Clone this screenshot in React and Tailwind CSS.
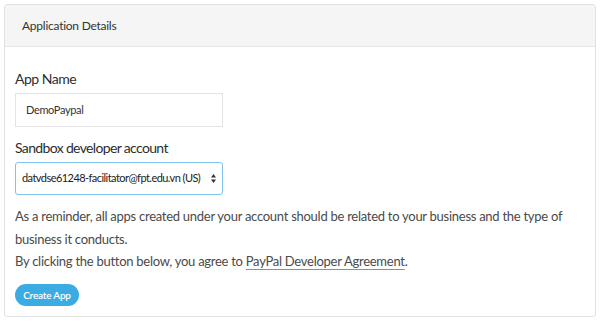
import React from 'react';

const App = () => {
  return (
    <div className="w-[602px] h-[322px] bg-white p-1" style={{ fontFamily: 'Lato, "Open Sans", sans-serif' }}>
      <div className="w-[592px] h-[313px] border border-[#e2e2e2] rounded-[3px] overflow-hidden">
        {/* header */}
        <div className="h-[42px] bg-[#f5f5f5] border-b border-[#e6e6e6] flex items-center px-[17px]">
          <span className="text-[12px] tracking-[-0.25px] text-[#333]">Application Details</span>
        </div>

        <div className="px-[10px] pt-[23px]">
          <label className="block text-[14px] tracking-[-0.5px] leading-[18px] text-[#2c2e2f]">App Name</label>
          <div className="mt-[5px] w-[208px] h-[34px] border border-[#e3e3e3] flex items-center px-[10px] text-[11px] tracking-[-0.35px] text-[#333]">
            DemoPaypal
          </div>

          <label className="block mt-[12px] text-[14px] tracking-[-0.65px] leading-[18px] text-[#2c2e2f]">Sandbox developer account</label>
          <div className="mt-[5px] w-[208px] h-[33px] border border-[#80c2ec] rounded-[3px] flex items-center justify-between pl-[6px] pr-[4px] text-[11px] tracking-[-0.55px] text-[#222] whitespace-nowrap">
            <span>datvdse61248-facilitator@fpt.edu.vn (US)</span>
            <svg width="7" height="11" viewBox="0 0 7 11" className="mr-[1px] shrink-0">
              <path d="M3.5 1 L6 4.5 H1 Z" fill="#333" />
              <path d="M3.5 10 L6 6.5 H1 Z" fill="#333" />
            </svg>
          </div>

          <p className="mt-[10px] text-[13px] tracking-[-0.27px] leading-[23px] text-[#4a4a4a] pr-[6px]">
            As a reminder, all apps created under your account should be related to your business and the type of business it conducts.
          </p>
          <p className="text-[13px] tracking-[-0.27px] leading-[21px] text-[#4a4a4a]">
            By clicking the button below, you agree to{' '}
            <a className="underline decoration-[#3aa9e0] underline-offset-[3px] text-[#4a4a4a]">PayPal Developer Agreement</a>.
          </p>

          <button className="mt-[12px] h-[22px] w-[64px] rounded-full bg-[#3aabe3] text-white text-[10px] tracking-[-0.2px] font-semibold">
            Create App
          </button>
        </div>
      </div>
    </div>
  );
};

export default App;
